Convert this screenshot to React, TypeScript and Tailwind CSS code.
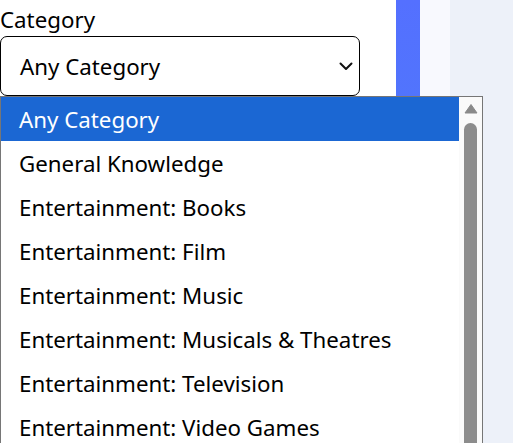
const categories = [
  "Any Category",
  "General Knowledge",
  "Entertainment: Books",
  "Entertainment: Film",
  "Entertainment: Music",
  "Entertainment: Musicals & Theatres",
  "Entertainment: Television",
  "Entertainment: Video Games",
];

function Chevron() {
  return (
    <svg width="14" height="9" viewBox="0 0 14 9" fill="none">
      <path d="M1.5 1.5 7 7l5.5-5.5" stroke="#111" strokeWidth="2" strokeLinecap="round" strokeLinejoin="round" />
    </svg>
  );
}

export default function App() {
  return (
    <div
      className="relative flex h-[443px] w-[513px] overflow-hidden bg-white text-black"
      style={{ fontFamily: '"Noto Sans", "Open Sans", sans-serif' }}
    >
      <div className="w-[396px] bg-white">
        <div className="pt-[5px] text-[22.3px] leading-[30px]">Category</div>
        <div className="mt-[1px] flex h-[60px] w-[360px] items-center justify-between rounded-[7px] border border-black pl-[19px] pr-[6px] text-[22.3px]">
          <span className="pt-[2px]">Any Category</span>
          <Chevron />
        </div>
      </div>
      <div className="w-[24px] bg-gradient-to-b from-[#5470ff] to-[#4582f4]" />
      <div className="w-[30px] bg-[#f8f9fe]" />
      <div className="flex-1 bg-[#edf1f9]" />

      {/* open option list */}
      <div className="absolute left-0 top-[96px] flex h-[360px] w-[483px] border border-[#767676] bg-white">
        <ul className="flex-1">
          {categories.map((c, i) => (
            <li
              key={c}
              className={
                "flex h-[44px] items-center pl-[18px] pt-[2px] text-[22.3px] " +
                (i === 0 ? "bg-[#1b67d3] text-white" : "text-black")
              }
            >
              {c}
            </li>
          ))}
        </ul>
        <div className="flex w-[23px] flex-col items-center bg-[#fafafa]">
          <svg width="14" height="11" viewBox="0 0 14 11" className="mt-[6px]">
            <path d="M7 1.5 13 10H1Z" fill="#8a8a8a" stroke="#8a8a8a" strokeLinejoin="round" />
          </svg>
          <div className="mt-[9px] w-[13px] flex-1 rounded-t-full bg-[#8c8c8c]" />
        </div>
      </div>
    </div>
  );
}
